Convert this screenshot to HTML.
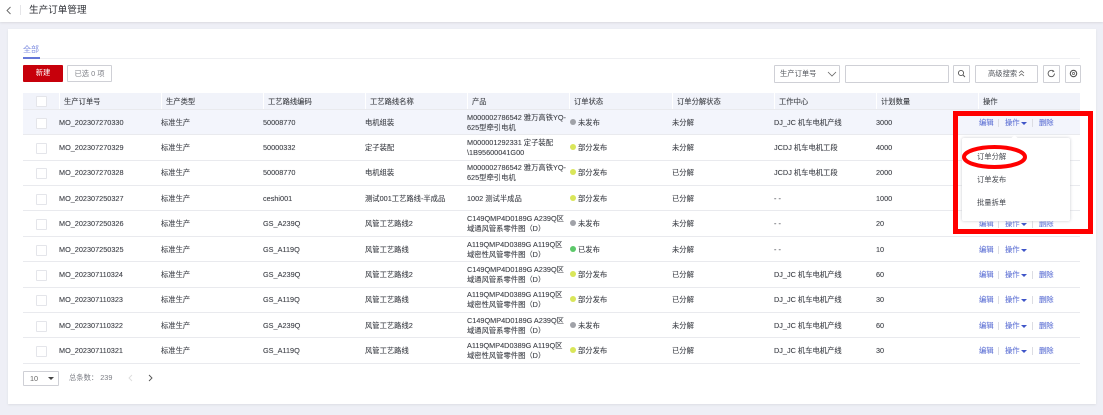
<!DOCTYPE html>
<html lang="zh"><head><meta charset="utf-8"><style>
html,body{margin:0;padding:0;width:1103px;height:415px;overflow:hidden;background:#eeeff6}
#p{position:relative;width:1103px;height:415px;overflow:hidden;font:7.3px/10px "Liberation Sans","Noto Sans CJK SC",sans-serif;color:#43464e;filter:blur(.3px)}
#p div{position:absolute;white-space:nowrap}
.h{height:17px;line-height:16px;top:94px;color:#45484f;text-shadow:0 0 .4px #777}
.s{top:93px;width:1px;height:16px;background:#fff}
.t{color:#43464e;margin-top:1px;text-shadow:0 0 .4px #888}
.l{left:23px;width:1057px;height:1px;background:#e9eaee}
.c{left:36px;width:9px;height:9px;border:1px solid #e4e5ea;background:#fff;border-radius:1px}
.o{color:#6678d6;margin-top:1px;text-shadow:0 0 .4px #9aa6e6}
.b{width:1px;height:8px;background:#dcdde3;margin-top:1px}
.d{width:6px;height:6px;border-radius:50%;margin-top:-1px}
.tr{width:0;height:0;border-left:3px solid transparent;border-right:3px solid transparent;border-top:3.5px solid #3f55c8;margin-top:1px}
#p .n{line-height:10px;white-space:normal;width:102px;margin-top:0}
.bx{border:1px solid #cfd0d6;background:#fff;border-radius:1px;box-sizing:border-box}
</style></head><body><div id="p">
<div style="left:0;top:0;width:1103px;height:22px;background:#fff;box-shadow:0 1px 2px #d9dae0"></div>
<svg style="position:absolute;left:5px;top:6px" width="7" height="9"><path d="M5.5 1 L2 4.5 L5.5 8" fill="none" stroke="#666" stroke-width=".9"/></svg>
<div style="left:20px;top:5px;width:1px;height:10px;background:#e5e5e8"></div>
<div style="left:29px;top:5px;font-size:9.6px;line-height:12px;color:#2f3137">生产订单管理</div>

<div style="left:8px;top:29px;width:1088px;height:375px;background:#fff;box-shadow:0 1px 2px #dddee4"></div>
<div style="left:23px;top:45px;font-size:8px;color:#7f8ee0">全部</div>
<div style="left:23px;top:58px;width:1057px;height:1px;background:#eeeff2"></div>
<div style="left:23px;top:57px;width:17px;height:2px;background:#6577d8"></div>
<div style="left:23px;top:65px;width:40px;height:17px;background:#c7000b;border-radius:1px;color:#fff;text-align:center;line-height:16px">新建</div>
<div class="bx" style="left:67px;top:65px;width:45px;height:17px;text-align:center;line-height:15px;color:#7d7f86">已选 0 项</div>

<div class="bx" style="left:774px;top:65px;width:66px;height:18px;line-height:15px;padding-left:5px;color:#55585f">生产订单号</div>
<svg style="position:absolute;left:827px;top:71px" width="10" height="6"><path d="M1 1 L5 5 L9 1" fill="none" stroke="#666" stroke-width=".8"/></svg>
<div class="bx" style="left:845px;top:65px;width:104px;height:18px"></div>
<div class="bx" style="left:953px;top:65px;width:17px;height:18px"></div>
<svg style="position:absolute;left:957px;top:69px" width="9" height="9"><circle cx="4" cy="4" r="2.6" fill="none" stroke="#555" stroke-width=".9"/><path d="M6 6 L8 8" stroke="#555" stroke-width=".9"/></svg>
<div class="bx" style="left:975px;top:65px;width:63px;height:18px;line-height:15px;padding-left:12px;color:#55585f">高级搜索</div>
<svg style="position:absolute;left:1018px;top:70px" width="7" height="7"><path d="M1 3 L3.5 .8 L6 3 M1 6 L3.5 3.8 L6 6" fill="none" stroke="#666" stroke-width=".8"/></svg>
<div class="bx" style="left:1043px;top:65px;width:17px;height:18px"></div>
<svg style="position:absolute;left:1047px;top:69px" width="9" height="9"><path d="M7.5 4.5 A3.2 3.2 0 1 1 6.3 2" fill="none" stroke="#555" stroke-width=".9"/><path d="M5.6 .8 L7.6 2.4 L5.4 3.4Z" fill="#555"/></svg>
<div class="bx" style="left:1065px;top:65px;width:16px;height:18px"></div>
<svg style="position:absolute;left:1069px;top:69px" width="9" height="9"><circle cx="4.5" cy="4.5" r="3.2" fill="none" stroke="#555" stroke-width="1.1"/><circle cx="4.5" cy="4.5" r="1.1" fill="none" stroke="#555" stroke-width=".7"/></svg>

<div style="left:23px;top:93px;width:1057px;height:16px;background:#f1f3fa"></div>
<div style="left:23px;top:110px;width:1057px;height:24px;background:#f3f5fc"></div>
<div class="c" style="top:96px"></div>
<div class="s" style="left:59px"></div><div class="s" style="left:161px"></div><div class="s" style="left:263px"></div><div class="s" style="left:365px"></div><div class="s" style="left:467px"></div><div class="s" style="left:569px"></div><div class="s" style="left:672px"></div><div class="s" style="left:774px"></div><div class="s" style="left:876px"></div><div class="s" style="left:978px"></div>
<div class="h" style="left:64px">生产订单号</div><div class="h" style="left:166px">生产类型</div><div class="h" style="left:268px">工艺路线编码</div><div class="h" style="left:370px">工艺路线名称</div><div class="h" style="left:472px">产品</div><div class="h" style="left:574px">订单状态</div><div class="h" style="left:677px">订单分解状态</div><div class="h" style="left:779px">工作中心</div><div class="h" style="left:881px">计划数量</div><div class="h" style="left:983px">操作</div>

<div class="l" style="top:109px"></div><div class="l" style="top:134px"></div><div class="l" style="top:160px"></div><div class="l" style="top:185px"></div><div class="l" style="top:210px"></div><div class="l" style="top:236px"></div><div class="l" style="top:261px"></div><div class="l" style="top:287px"></div><div class="l" style="top:312px"></div><div class="l" style="top:337px"></div><div class="l" style="top:363px"></div>

<!-- row 1 -->
<div class="c" style="top:118px"></div><div class="t" style="left:59px;top:117px">MO_202307270330</div><div class="t" style="left:161px;top:117px">标准生产</div><div class="t" style="left:263px;top:117px">50008770</div><div class="t" style="left:365px;top:117px">电机组装</div><div class="t n" style="left:467px;top:113px">M000002786542 雅万高铁YQ-625型牵引电机</div><div class="d" style="left:570px;top:120px;background:#a0a2a8"></div><div class="t" style="left:578px;top:117px">未发布</div><div class="t" style="left:672px;top:117px">未分解</div><div class="t" style="left:774px;top:117px">DJ_JC 机车电机产线</div><div class="t" style="left:876px;top:117px">3000</div>
<div class="o" style="left:979px;top:117px">编辑</div><div class="b" style="left:998px;top:118px"></div><div class="o" style="left:1005px;top:117px">操作</div><div class="tr" style="left:1021px;top:121px"></div><div class="b" style="left:1032px;top:118px"></div><div class="o" style="left:1039px;top:117px">删除</div>
<!-- row 2 -->
<div class="c" style="top:143px"></div><div class="t" style="left:59px;top:142px">MO_202307270329</div><div class="t" style="left:161px;top:142px">标准生产</div><div class="t" style="left:263px;top:142px">50000332</div><div class="t" style="left:365px;top:142px">定子装配</div><div class="t n" style="left:467px;top:138px">M000001292331 定子装配<br>\1B95600041G00</div><div class="d" style="left:570px;top:145px;background:#d9e65a"></div><div class="t" style="left:578px;top:142px">部分发布</div><div class="t" style="left:672px;top:142px">未分解</div><div class="t" style="left:774px;top:142px">JCDJ 机车电机工段</div><div class="t" style="left:876px;top:142px">4000</div>
<!-- row 3 -->
<div class="c" style="top:168px"></div><div class="t" style="left:59px;top:167px">MO_202307270328</div><div class="t" style="left:161px;top:167px">标准生产</div><div class="t" style="left:263px;top:167px">50008770</div><div class="t" style="left:365px;top:167px">电机组装</div><div class="t n" style="left:467px;top:163px">M000002786542 雅万高铁YQ-625型牵引电机</div><div class="d" style="left:570px;top:170px;background:#d9e65a"></div><div class="t" style="left:578px;top:167px">部分发布</div><div class="t" style="left:672px;top:167px">已分解</div><div class="t" style="left:774px;top:167px">JCDJ 机车电机工段</div><div class="t" style="left:876px;top:167px">2000</div>
<!-- row 4 -->
<div class="c" style="top:194px"></div><div class="t" style="left:59px;top:193px">MO_202307250327</div><div class="t" style="left:161px;top:193px">标准生产</div><div class="t" style="left:263px;top:193px">ceshi001</div><div class="t" style="left:365px;top:193px">测试001工艺路线-半成品</div><div class="t" style="left:467px;top:193px">1002 测试半成品</div><div class="d" style="left:570px;top:196px;background:#d9e65a"></div><div class="t" style="left:578px;top:193px">部分发布</div><div class="t" style="left:672px;top:193px">已分解</div><div class="t" style="left:774px;top:193px">- -</div><div class="t" style="left:876px;top:193px">1000</div>
<!-- row 5 -->
<div class="c" style="top:219px"></div><div class="t" style="left:59px;top:218px">MO_202307250326</div><div class="t" style="left:161px;top:218px">标准生产</div><div class="t" style="left:263px;top:218px">GS_A239Q</div><div class="t" style="left:365px;top:218px">风管工艺路线2</div><div class="t n" style="left:467px;top:214px">C149QMP4D0189G A239Q区域通风管系零件图（D）</div><div class="d" style="left:570px;top:221px;background:#a0a2a8"></div><div class="t" style="left:578px;top:218px">未发布</div><div class="t" style="left:672px;top:218px">未分解</div><div class="t" style="left:774px;top:218px">- -</div><div class="t" style="left:876px;top:218px">20</div>
<div class="o" style="left:979px;top:218px">编辑</div><div class="b" style="left:998px;top:219px"></div><div class="o" style="left:1005px;top:218px">操作</div><div class="tr" style="left:1021px;top:222px"></div><div class="b" style="left:1032px;top:219px"></div><div class="o" style="left:1039px;top:218px">删除</div>
<!-- row 6 -->
<div class="c" style="top:245px"></div><div class="t" style="left:59px;top:244px">MO_202307250325</div><div class="t" style="left:161px;top:244px">标准生产</div><div class="t" style="left:263px;top:244px">GS_A119Q</div><div class="t" style="left:365px;top:244px">风管工艺路线</div><div class="t n" style="left:467px;top:240px">A119QMP4D0389G A119Q区域密性风管零件图（D）</div><div class="d" style="left:570px;top:247px;background:#5cc86a"></div><div class="t" style="left:578px;top:244px">已发布</div><div class="t" style="left:672px;top:244px">未分解</div><div class="t" style="left:774px;top:244px">- -</div><div class="t" style="left:876px;top:244px">10</div>
<div class="o" style="left:979px;top:244px">编辑</div><div class="b" style="left:998px;top:245px"></div><div class="o" style="left:1005px;top:244px">操作</div><div class="tr" style="left:1021px;top:248px"></div>
<!-- row 7 -->
<div class="c" style="top:270px"></div><div class="t" style="left:59px;top:269px">MO_202307110324</div><div class="t" style="left:161px;top:269px">标准生产</div><div class="t" style="left:263px;top:269px">GS_A239Q</div><div class="t" style="left:365px;top:269px">风管工艺路线2</div><div class="t n" style="left:467px;top:265px">C149QMP4D0189G A239Q区域通风管系零件图（D）</div><div class="d" style="left:570px;top:272px;background:#d9e65a"></div><div class="t" style="left:578px;top:269px">部分发布</div><div class="t" style="left:672px;top:269px">已分解</div><div class="t" style="left:774px;top:269px">DJ_JC 机车电机产线</div><div class="t" style="left:876px;top:269px">60</div>
<div class="o" style="left:979px;top:269px">编辑</div><div class="b" style="left:998px;top:270px"></div><div class="o" style="left:1005px;top:269px">操作</div><div class="tr" style="left:1021px;top:273px"></div><div class="b" style="left:1032px;top:270px"></div><div class="o" style="left:1039px;top:269px">删除</div>
<!-- row 8 -->
<div class="c" style="top:295px"></div><div class="t" style="left:59px;top:294px">MO_202307110323</div><div class="t" style="left:161px;top:294px">标准生产</div><div class="t" style="left:263px;top:294px">GS_A119Q</div><div class="t" style="left:365px;top:294px">风管工艺路线</div><div class="t n" style="left:467px;top:290px">A119QMP4D0389G A119Q区域密性风管零件图（D）</div><div class="d" style="left:570px;top:297px;background:#d9e65a"></div><div class="t" style="left:578px;top:294px">部分发布</div><div class="t" style="left:672px;top:294px">已分解</div><div class="t" style="left:774px;top:294px">DJ_JC 机车电机产线</div><div class="t" style="left:876px;top:294px">30</div>
<div class="o" style="left:979px;top:294px">编辑</div><div class="b" style="left:998px;top:295px"></div><div class="o" style="left:1005px;top:294px">操作</div><div class="tr" style="left:1021px;top:298px"></div><div class="b" style="left:1032px;top:295px"></div><div class="o" style="left:1039px;top:294px">删除</div>
<!-- row 9 -->
<div class="c" style="top:321px"></div><div class="t" style="left:59px;top:320px">MO_202307110322</div><div class="t" style="left:161px;top:320px">标准生产</div><div class="t" style="left:263px;top:320px">GS_A239Q</div><div class="t" style="left:365px;top:320px">风管工艺路线2</div><div class="t n" style="left:467px;top:316px">C149QMP4D0189G A239Q区域通风管系零件图（D）</div><div class="d" style="left:570px;top:323px;background:#a0a2a8"></div><div class="t" style="left:578px;top:320px">未发布</div><div class="t" style="left:672px;top:320px">未分解</div><div class="t" style="left:774px;top:320px">DJ_JC 机车电机产线</div><div class="t" style="left:876px;top:320px">60</div>
<div class="o" style="left:979px;top:320px">编辑</div><div class="b" style="left:998px;top:321px"></div><div class="o" style="left:1005px;top:320px">操作</div><div class="tr" style="left:1021px;top:324px"></div><div class="b" style="left:1032px;top:321px"></div><div class="o" style="left:1039px;top:320px">删除</div>
<!-- row 10 -->
<div class="c" style="top:346px"></div><div class="t" style="left:59px;top:345px">MO_202307110321</div><div class="t" style="left:161px;top:345px">标准生产</div><div class="t" style="left:263px;top:345px">GS_A119Q</div><div class="t" style="left:365px;top:345px">风管工艺路线</div><div class="t n" style="left:467px;top:341px">A119QMP4D0389G A119Q区域密性风管零件图（D）</div><div class="d" style="left:570px;top:348px;background:#d9e65a"></div><div class="t" style="left:578px;top:345px">部分发布</div><div class="t" style="left:672px;top:345px">已分解</div><div class="t" style="left:774px;top:345px">DJ_JC 机车电机产线</div><div class="t" style="left:876px;top:345px">30</div>
<div class="o" style="left:979px;top:345px">编辑</div><div class="b" style="left:998px;top:346px"></div><div class="o" style="left:1005px;top:345px">操作</div><div class="tr" style="left:1021px;top:349px"></div><div class="b" style="left:1032px;top:346px"></div><div class="o" style="left:1039px;top:345px">删除</div>

<!-- pagination -->
<div class="bx" style="left:23px;top:371px;width:36px;height:15px;line-height:13px;padding-left:6px;color:#666">10</div>
<div style="left:48px;top:377px;width:0;height:0;border-left:3px solid transparent;border-right:3px solid transparent;border-top:3px solid #444"></div>
<div style="left:69px;top:373px;color:#7d7f86">总条数： 239</div>
<svg style="position:absolute;left:127px;top:374px" width="7" height="9"><path d="M5 1 L2 4 L5 7" fill="none" stroke="#ddd" stroke-width=".9"/></svg>
<svg style="position:absolute;left:147px;top:374px" width="7" height="9"><path d="M2 1 L5 4 L2 7" fill="none" stroke="#555" stroke-width=".9"/></svg>

<!-- popup -->
<div style="left:962px;top:138px;width:108px;height:83px;background:#fff;border-radius:2px;box-shadow:0 0 3px #c9cad0"></div>
<div style="left:1012px;top:136px;width:5px;height:5px;background:#fff;transform:rotate(45deg)"></div>
<div style="left:977px;top:152px;color:#45484f">订单分解</div>
<div style="left:977px;top:175px;color:#45484f">订单发布</div>
<div style="left:977px;top:198px;color:#45484f">批量拆单</div>

<!-- annotations -->
<div style="left:953px;top:111px;width:140px;height:123px;border:5px solid #f00;box-sizing:border-box"></div>
<svg style="position:absolute;left:960px;top:143px" width="70" height="28"><ellipse cx="34.5" cy="14" rx="30.5" ry="10" fill="none" stroke="#f00" stroke-width="4"/></svg>
</div></body></html>
